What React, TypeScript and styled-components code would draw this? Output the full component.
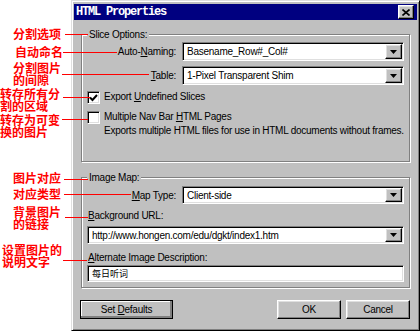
import React from 'react';
import styled, { createGlobalStyle } from 'styled-components';

const GlobalStyle = createGlobalStyle`
  html, body { margin: 0; padding: 0; background: #fff; }
  body { width: 420px; height: 332px; overflow: hidden; }
`;

const Page = styled.div`
  position: relative;
  display: flex;
  width: 420px;
  height: 332px;
  background: #fff;
  font-family: "Liberation Sans", Arial, sans-serif;
  font-size: 10px;
  letter-spacing: -0.25px;
  color: #000;
`;

const Gutter = styled.div`
  flex: none;
  width: 71px;
`;

const Window = styled.div`
  flex: none;
  box-sizing: border-box;
  width: 349px;
  height: 331px;
  display: flex;
  flex-direction: column;
  padding: 3px 2px 2px 2px;
  background: #c0c0c0;
  border: 1px solid;
  border-color: #dfdfdf #000 #000 #dfdfdf;
  box-shadow: inset 1px 1px #fff, inset -1px -1px #808080;
`;

const TitleBar = styled.div`
  height: 16px;
  display: flex;
  align-items: center;
  justify-content: space-between;
  padding: 0 3px 0 2px;
  background: #000080;
`;

const TitleText = styled.span`
  color: #fff;
  font-family: "Liberation Mono", "DejaVu Sans Mono", monospace;
  font-weight: bold;
  font-size: 12px;
  letter-spacing: -1.2px;
`;

const Raised = styled.div`
  box-sizing: border-box;
  display: flex;
  align-items: center;
  justify-content: center;
  background: #c0c0c0;
  border: 1px solid;
  border-color: #fff #000 #000 #fff;
  box-shadow: inset -1px -1px #808080, inset 1px 1px #dfdfdf;
`;

const CloseButton = styled(Raised)`
  width: 16px;
  height: 14px;
`;

const Body = styled.div`
  display: flex;
  flex-direction: column;
  padding: 14px 7px 0 7px;
`;

const Group = styled.div<{ $pt: number; $pb: number }>`
  position: relative;
  display: flex;
  flex-direction: column;
  padding: ${(p) => p.$pt}px 5px ${(p) => p.$pb}px 5px;
  border: 1px solid #808080;
  box-shadow: inset 1px 1px #fff, 1px 1px #fff;
`;

const Caption = styled.span`
  position: absolute;
  top: -7px;
  left: 5px;
  padding: 0 2px;
  line-height: 13px;
  background: #c0c0c0;
`;

const FieldRow = styled.div<{ $mt?: number }>`
  display: grid;
  grid-template-columns: 89px 222px;
  column-gap: 6px;
  align-items: center;
  margin-top: ${(p) => p.$mt ?? 0}px;
`;

const RowLabel = styled.span`
  text-align: right;
`;

const TopLabel = styled.div<{ $mt: number }>`
  margin-top: ${(p) => p.$mt}px;
  padding-left: 1px;
  line-height: 14px;
`;

const Sunken = styled.div<{ $h: number }>`
  box-sizing: border-box;
  height: ${(p) => p.$h}px;
  display: flex;
  align-items: center;
  padding: 1px;
  background: #fff;
  border: 1px solid;
  border-color: #808080 #fff #fff #808080;
  box-shadow: inset 1px 1px #000, inset -1px -1px #dfdfdf;
`;

const Value = styled.span<{ $cjk?: boolean }>`
  flex: 1;
  padding-left: 3px;
  white-space: nowrap;
  overflow: hidden;
  ${(p) =>
    p.$cjk &&
    `font-family: "Noto Sans CJK SC", sans-serif; font-size: 9px; letter-spacing: 0;`}
`;

const DropButton = styled(Raised)`
  flex: none;
  width: 17px;
  height: 100%;
`;

const CheckRow = styled.div<{ $mt: number }>`
  display: grid;
  grid-template-columns: 13px 1fr;
  column-gap: 4px;
  align-items: start;
  margin-top: ${(p) => p.$mt}px;
  line-height: 14px;
`;

const CheckBox = styled.div`
  box-sizing: border-box;
  width: 13px;
  height: 13px;
  margin-top: 1px;
  display: flex;
  align-items: center;
  justify-content: center;
  background: #fff;
  border: 1px solid;
  border-color: #808080 #fff #fff #808080;
  box-shadow: inset 1px 1px #000, inset -1px -1px #dfdfdf;
`;

const Key = styled.span`
  text-decoration: underline;
  text-underline-offset: 1px;
`;

const Spacer = styled.div<{ $h: number }>`
  height: ${(p) => p.$h}px;
`;

const ButtonRow = styled.div`
  display: flex;
  gap: 5px;
  margin: 12px 0 0 -1px;
`;

const PushButton = styled(Raised)<{ $w: number; $default?: boolean }>`
  width: ${(p) => p.$w}px;
  height: 19px;
  ${(p) =>
    p.$default &&
    `outline: 1px solid #000; outline-offset: -1px;
     box-shadow: inset -2px -2px #808080, inset 1px 1px #fff;`}
  &:nth-child(1) { margin-right: auto; }
`;

const Note = styled.div<{ $x: number; $y: number }>`
  position: absolute;
  left: ${(p) => p.$x}px;
  top: ${(p) => p.$y}px;
  color: #f00;
  font-family: "Noto Sans CJK SC", sans-serif;
  font-size: 12px;
  font-weight: bold;
  line-height: 12px;
  letter-spacing: 0;
  white-space: pre;
`;

const Leader = styled.div<{ $x: number; $y: number; $w: number }>`
  position: absolute;
  left: ${(p) => p.$x}px;
  top: ${(p) => p.$y}px;
  width: ${(p) => p.$w}px;
  height: 1px;
  background: #f00;
  z-index: 2;
`;

const notes = [
  { text: '分割选项', x: 13, y: 28, ly: 34, lx: 65, lx2: 88 },
  { text: '自动命名', x: 15, y: 46, ly: 52, lx: 63, lx2: 117 },
  { text: '分割图片\n的间隙', x: 13, y: 62, ly: 74, lx: 62, lx2: 149 },
  { text: '转存所有分\n割的区域', x: 0, y: 88, ly: 97, lx: 63, lx2: 90 },
  { text: '转存为可变\n换的图片', x: 0, y: 114, ly: 119, lx: 62, lx2: 88 },
  { text: '图片对应', x: 13, y: 172, ly: 179, lx: 64, lx2: 88 },
  { text: '对应类型', x: 13, y: 188, ly: 194, lx: 64, lx2: 131 },
  { text: '背景图片\n的链接', x: 13, y: 206, ly: 217, lx: 65, lx2: 88 },
  { text: '设置图片的\n说明文字', x: 2, y: 244, ly: 260, lx: 63, lx2: 87 },
];

const Arrow = () => (
  <svg width="7" height="4" viewBox="0 0 7 4">
    <polygon points="0,0 7,0 3.5,4" fill="#000" />
  </svg>
);

const Check = () => (
  <svg width="9" height="8" viewBox="0 0 9 8">
    <path d="M1 3.5 L3.5 6 L8 1" stroke="#000" strokeWidth="2" fill="none" />
  </svg>
);

const Combo: React.FC<{ value: string; h?: number }> = ({ value, h = 19 }) => (
  <Sunken $h={h}>
    <Value>{value}</Value>
    <DropButton>
      <Arrow />
    </DropButton>
  </Sunken>
);

export default function App() {
  return (
    <Page>
      <GlobalStyle />
      <Gutter />
      <Window>
        <TitleBar>
          <TitleText>HTML Properties</TitleText>
          <CloseButton>
            <svg width="8" height="7" viewBox="0 0 8 7">
              <path d="M0.5 0.5 L7.5 6.5 M7.5 0.5 L0.5 6.5" stroke="#000" strokeWidth="1.6" />
            </svg>
          </CloseButton>
        </TitleBar>

        <Body>
          <Group $pt={7} $pb={23}>
            <Caption>Slice Options:</Caption>
            <FieldRow>
              <RowLabel>
                Auto-<Key>N</Key>aming:
              </RowLabel>
              <Combo value="Basename_Row#_Col#" />
            </FieldRow>
            <FieldRow $mt={5}>
              <RowLabel>
                <Key>T</Key>able:
              </RowLabel>
              <Combo value="1-Pixel Transparent Shim" />
            </FieldRow>
            <CheckRow $mt={5}>
              <CheckBox>
                <Check />
              </CheckBox>
              <span>
                Export <Key>U</Key>ndefined Slices
              </span>
            </CheckRow>
            <CheckRow $mt={6}>
              <CheckBox />
              <span>
                Multiple Nav Bar <Key>H</Key>TML Pages
                <br />
                Exports multiple HTML files for use in HTML documents without frames.
              </span>
            </CheckRow>
          </Group>

          <Spacer $h={15} />

          <Group $pt={8} $pb={5}>
            <Caption>Image Map:</Caption>
            <FieldRow>
              <RowLabel>
                <Key>M</Key>ap Type:
              </RowLabel>
              <Combo value="Client-side" h={18} />
            </FieldRow>
            <TopLabel $mt={5}>
              <Key>B</Key>ackground URL:
            </TopLabel>
            <Spacer $h={3} />
            <Combo value="http://www.hongen.com/edu/dgkt/index1.htm" h={18} />
            <TopLabel $mt={7}>
              <Key>A</Key>lternate Image Description:
            </TopLabel>
            <Sunken $h={17}>
              <Value $cjk>每日听词</Value>
            </Sunken>
          </Group>

          <ButtonRow>
            <PushButton $w={93} $default>
              Set&nbsp;<Key>D</Key>efaults
            </PushButton>
            <PushButton $w={64}>OK</PushButton>
            <PushButton $w={64}>Cancel</PushButton>
          </ButtonRow>
        </Body>
      </Window>

      {notes.map((n) => (
        <React.Fragment key={n.text}>
          <Note $x={n.x} $y={n.y}>
            {n.text}
          </Note>
          <Leader $x={n.lx} $y={n.ly} $w={n.lx2 - n.lx} />
        </React.Fragment>
      ))}
    </Page>
  );
}
